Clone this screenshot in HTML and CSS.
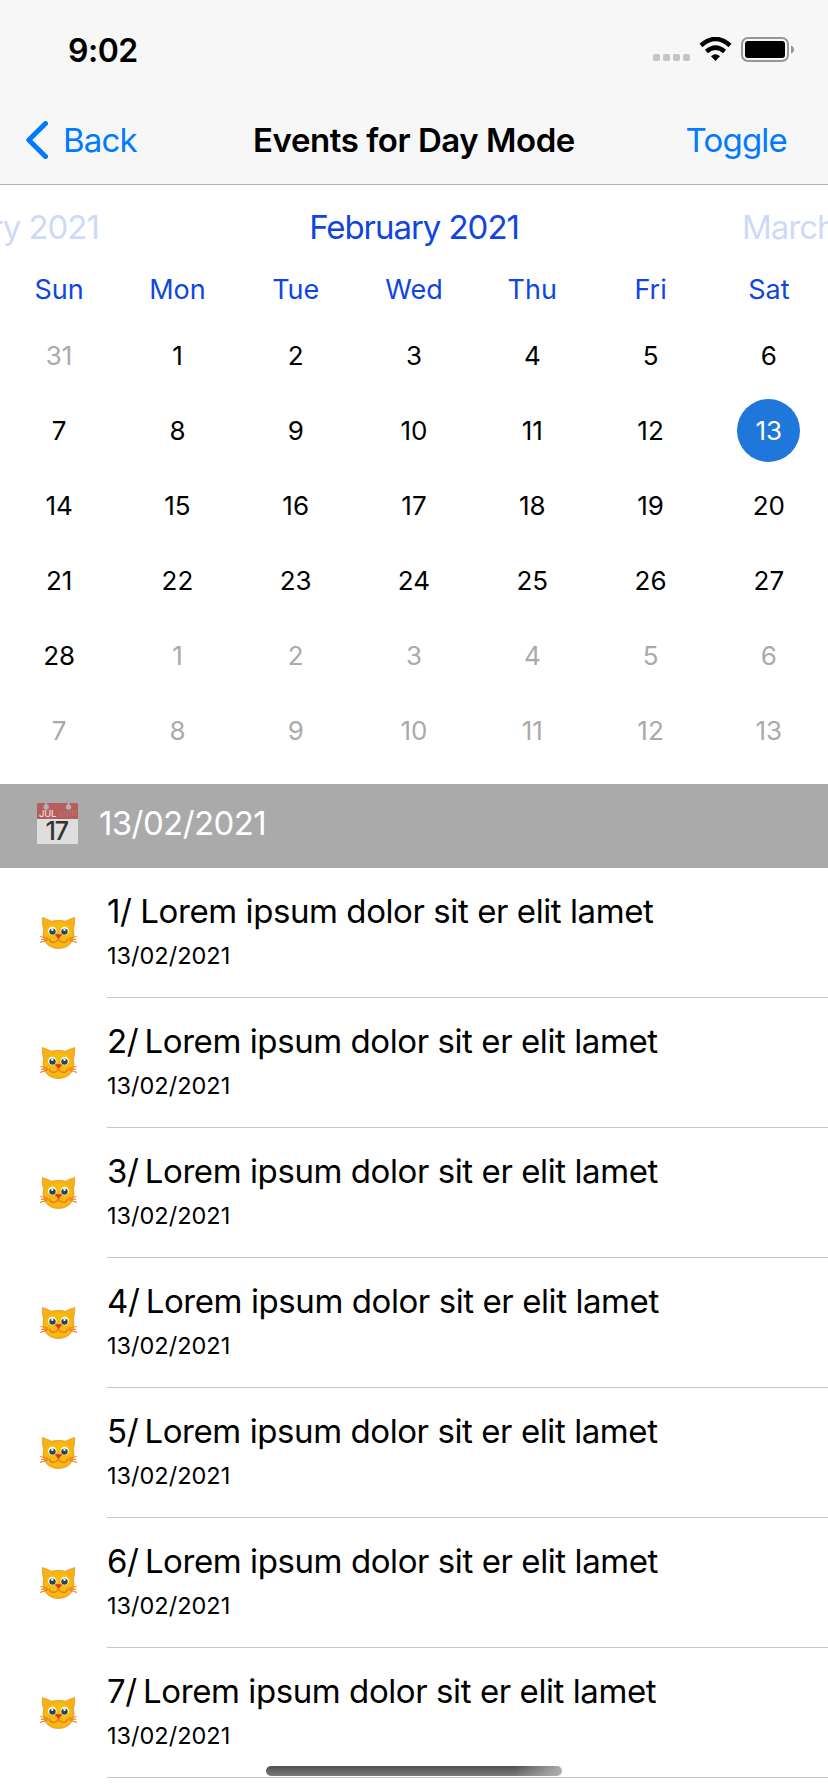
FILE: index.html
```html
<!DOCTYPE html>
<html lang="en">
<head>
<meta charset="utf-8">
<title>Events for Day Mode</title>
<link rel="stylesheet" href="styles.css">
</head>
<body>
<svg class="defs" aria-hidden="true">
  <symbol id="cat" viewBox="0 0 37 32">
    <path d="M2.4.5C5 1.500 9 2.800 11.500 4.200Q18.500 2.500 25.500 4.200C28 2.800 32 1.500 34.600.5C34.800 4.500 34.600 8.500 33.300 12C36 22 30 31.500 18.500 31.500S1 22 3.700 12C2.400 8.500 2.200 4.500 2.400.5Z" fill="#f6b117" stroke="#ee9424" stroke-width=".8"/>
    <path d="M6 13Q9 6.500 18.500 6T31 13Q34 22 28 27Q18.500 32 9 27Q3 22 6 13Z" fill="#f7bd0e"/>
    <path d="M.3 19.500L8 21M0 25.500L8.500 22.800M36.700 19.500L29 21M37 25.500L28.500 22.800M1 22.300L8 22M36 22.300L29 22" stroke="#ee8425" stroke-width="1.200" fill="none"/>
    <circle cx="12.300" cy="14" r="4.200" fill="#fff"/><circle cx="24.700" cy="14" r="4.200" fill="#fff"/>
    <circle cx="12.500" cy="14.600" r="3.200" fill="#294657"/><circle cx="24.500" cy="14.600" r="3.200" fill="#294657"/>
    <circle cx="12.300" cy="12.800" r="1.200" fill="#fff"/><circle cx="24.500" cy="12.800" r="1.200" fill="#fff"/>
    <path d="M9.500 21.500C9.500 27 17.800 26.500 18.500 20.500C19.200 26.500 27.500 27 27.500 21.500" stroke="#ee7d22" stroke-width="1.600" fill="none"/>
    <path d="M15.500 17.800H21.500L18.500 21.200Z" fill="#d9362a" stroke="#d9362a" stroke-linejoin="round"/>
  </symbol>
</svg>
<div class="screen">
  <header class="top">
    <div class="status">
      <span class="time">9:02</span>
      <svg class="status-icons" width="142" height="26" viewBox="0 0 142 26">
        <g fill="#c5c5c5"><rect x="0" y="17" width="7" height="7" rx="1.800"/><rect x="10" y="17" width="7" height="7" rx="1.800"/><rect x="20" y="17" width="7" height="7" rx="1.800"/><rect x="30" y="17" width="7" height="7" rx="1.800"/></g>
        <g fill="none" stroke="#000" stroke-width="4.400"><path d="M48 8.500Q62.500-4.600 77 8.500"/><path d="M53.400 14.500Q62.500 6.700 71.600 14.500"/></g>
        <path d="M58 19.300Q62.500 15.200 67 19.300L62.500 24Z"/>
        <rect x="89" y="1" width="46" height="23" rx="6" fill="none" stroke="#979797" stroke-width="2"/>
        <rect x="92" y="4" width="40" height="17" rx="3"/>
        <path d="M138 8.500Q141 9.500 141 12.500T138 16.500Z" fill="#979797"/>
      </svg>
    </div>
    <nav class="nav">
      <a class="back"><svg width="22" height="38" viewBox="0 0 22 38"><path d="M19.500 2.500L2.800 19L19.500 35.500" fill="none" stroke="#007aff" stroke-width="5" stroke-linecap="round" stroke-linejoin="round"/></svg><span class="action">Back</span></a>
      <h1 class="title">Events for Day Mode</h1>
      <a class="action toggle">Toggle</a>
    </nav>
  </header>
  <main>
    <section class="calendar">
      <div class="months"><span class="month faded">January 2021</span><span class="month">February 2021</span><span class="month faded">March 2021</span></div>
      <div class="week weekdays"><span>Sun</span><span>Mon</span><span>Tue</span><span>Wed</span><span>Thu</span><span>Fri</span><span>Sat</span></div>
      <div class="week"><span class="out">31</span><span>1</span><span>2</span><span>3</span><span>4</span><span>5</span><span>6</span></div>
      <div class="week"><span>7</span><span>8</span><span>9</span><span>10</span><span>11</span><span>12</span><span><b class="selected">13</b></span></div>
      <div class="week"><span>14</span><span>15</span><span>16</span><span>17</span><span>18</span><span>19</span><span>20</span></div>
      <div class="week"><span>21</span><span>22</span><span>23</span><span>24</span><span>25</span><span>26</span><span>27</span></div>
      <div class="week"><span>28</span><span class="out">1</span><span class="out">2</span><span class="out">3</span><span class="out">4</span><span class="out">5</span><span class="out">6</span></div>
      <div class="week"><span class="out">7</span><span class="out">8</span><span class="out">9</span><span class="out">10</span><span class="out">11</span><span class="out">12</span><span class="out">13</span></div>
    </section>
    <section>
      <div class="day-header">
        <svg class="day-icon" width="41" height="41" viewBox="0 0 41 41">
          <rect width="41" height="41" rx="1" fill="#dedede"/>
          <path d="M0 1Q0 0 1 0H40Q41 0 41 1V16H0Z" fill="#b55e5e"/>
          <path d="M9.200 0V3M31.500 0V3" stroke="#c6c2c2" stroke-width="1.500"/>
          <circle cx="9.200" cy="4" r="2.700" fill="#b5b0b0"/><circle cx="31.500" cy="4" r="2.700" fill="#b5b0b0"/>
          <path d="M23 9V14M25.500 8.500V14M28 8V13.500M30.500 8V13.500M33 7.500V13M35.500 7.500V13M38 7V13" stroke="#c27c7c" stroke-width=".9" stroke-dasharray="1.500 .7"/>
          <text x="2" y="14" class="icon-month">JUL</text>
          <text x="19.800" y="36.800" class="icon-day" text-anchor="middle">17</text>
        </svg>
        <span class="day-date">13/02/2021</span>
      </div>
      <ul class="events">
        <li class="event"><svg class="cat"><use href="#cat"/></svg><div class="info"><span class="name">1/ Lorem ipsum dolor sit er elit lamet</span><span class="date">13/02/2021</span></div></li>
        <li class="event"><svg class="cat"><use href="#cat"/></svg><div class="info"><span class="name"><span class="num">2/</span> Lorem ipsum dolor sit er elit lamet</span><span class="date">13/02/2021</span></div></li>
        <li class="event"><svg class="cat"><use href="#cat"/></svg><div class="info"><span class="name"><span class="num">3/</span> Lorem ipsum dolor sit er elit lamet</span><span class="date">13/02/2021</span></div></li>
        <li class="event"><svg class="cat"><use href="#cat"/></svg><div class="info"><span class="name"><span class="num">4/</span> Lorem ipsum dolor sit er elit lamet</span><span class="date">13/02/2021</span></div></li>
        <li class="event"><svg class="cat"><use href="#cat"/></svg><div class="info"><span class="name"><span class="num">5/</span> Lorem ipsum dolor sit er elit lamet</span><span class="date">13/02/2021</span></div></li>
        <li class="event"><svg class="cat"><use href="#cat"/></svg><div class="info"><span class="name"><span class="num">6/</span> Lorem ipsum dolor sit er elit lamet</span><span class="date">13/02/2021</span></div></li>
        <li class="event"><svg class="cat"><use href="#cat"/></svg><div class="info"><span class="name"><span class="num">7/</span> Lorem ipsum dolor sit er elit lamet</span><span class="date">13/02/2021</span></div></li>
      </ul>
    </section>
  </main>
  <div class="home-indicator"></div>
</div>
</body>
</html>
```
FILE: styles.css
```css
* { box-sizing: border-box; }
body { margin: 0; background: #fff; color: #000; font-family: Inter, "Liberation Sans", sans-serif; }
.defs { position: absolute; width: 0; height: 0; }
.screen { position: relative; width: 828px; height: 1792px; overflow: hidden; }
.top { height: 185px; background: #f7f7f7; border-bottom: 1px solid #b2b2b2; }
.status { display: flex; justify-content: space-between; height: 96px; padding: 37px 33px 0 68px; }
.time { font-size: 32px; line-height: 27px; font-weight: 600; letter-spacing: -0.5px; }
.status-icons { display: block; }
.nav { display: grid; grid-template-columns: 1fr auto 1fr; align-items: center; height: 88px; padding: 0 26px; }
.back { display: flex; align-items: center; gap: 15px; }
.action { color: #007aff; font-size: 33px; line-height: 40px; letter-spacing: -0.8px; }
.toggle { justify-self: end; margin-right: 15px; }
.title { margin: 0; font-size: 33px; line-height: 40px; font-weight: 600; letter-spacing: -0.45px; white-space: nowrap; }
.calendar { height: 599px; padding-top: 7px; }
.months { display: grid; grid-template-columns: repeat(3, 414px); justify-content: center; height: 71px; overflow: hidden; }
.month { text-align: center; color: #1046e0; font-size: 33px; line-height: 70px; letter-spacing: -1.05px; }
.faded { opacity: .2; }
.week { display: grid; grid-template-columns: repeat(7, 1fr); height: 75px; font-size: 26px; line-height: 75px; text-align: center; }
.weekdays { height: 55px; font-size: 27px; line-height: 54px; color: #1046e0; }
.out { color: #aaa; }
.selected { display: inline-block; width: 63px; height: 63px; border-radius: 50%; background: #1f77db; color: #fff; font-weight: 400; line-height: 63px; }
.day-header { display: flex; height: 84px; padding: 19px 0 0 37px; gap: 21px; background: #aaa; color: #fff; }
.day-icon { display: block; }
.day-date { font-size: 33px; line-height: 40px; letter-spacing: -0.6px; }
.icon-month { font-size: 9.500px; font-weight: 500; fill: #eadada; letter-spacing: -0.3px; }
.icon-day { font-size: 25px; font-weight: 500; fill: #333; letter-spacing: -1px; }
.events { list-style: none; margin: 0; padding: 0; }
.event { display: flex; align-items: center; height: 130px; padding-left: 40px; gap: 30px; }
.cat { width: 37px; height: 32px; flex: none; }
.info { display: flex; flex-direction: column; flex: 1; height: 130px; padding-top: 23px; border-bottom: 1px solid #c6c6c8; }
.name { font-size: 33px; line-height: 40px; letter-spacing: -0.42px; white-space: nowrap; }
.num { margin-right: -2.500px; }
.date { margin-top: 10px; font-size: 23.500px; line-height: 30px; }
.home-indicator { position: absolute; left: 266px; top: 1766px; width: 296px; height: 10px; border-radius: 5px; background: linear-gradient(100deg, transparent 84%, rgba(185,185,185,.9) 100%), linear-gradient(#505050, #7b7b7b); }
```
